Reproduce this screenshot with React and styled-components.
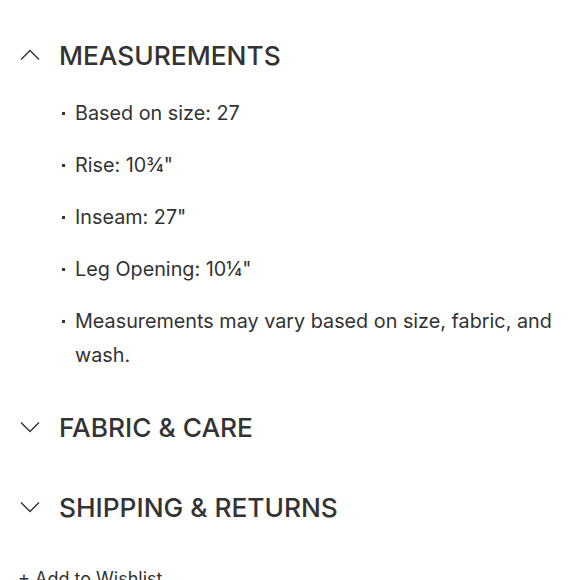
import styled, { createGlobalStyle } from "styled-components";

const GlobalStyle = createGlobalStyle`
  body {
    margin: 0;
    background: #fff;
    font-family: Inter, "Liberation Sans", sans-serif;
    color: #333;
  }
`;

const measurements = [
  "Based on size: 27",
  "Rise: 10¾\"",
  "Inseam: 27\"",
  "Leg Opening: 10¼\"",
  "Measurements may vary based on size, fabric, and wash.",
];

const sections = [
  { title: "MEASUREMENTS", open: true, items: measurements },
  { title: "FABRIC & CARE", open: false },
  { title: "SHIPPING & RETURNS", open: false },
];

function Chevron({ open }) {
  return (
    <ChevronIcon viewBox="0 0 20 12" $open={open}>
      <path d="M1 1.5 L10 10.5 L19 1.5" />
    </ChevronIcon>
  );
}

export default function App() {
  return (
    <>
      <GlobalStyle />
      <Page>
        {sections.map((s) => (
          <Section key={s.title}>
            <Header>
              <Chevron open={s.open} />
              <Title>{s.title}</Title>
            </Header>
            {s.open && (
              <List>
                {s.items.map((item) => (
                  <Item key={item}>{item}</Item>
                ))}
              </List>
            )}
          </Section>
        ))}
        <Wishlist>+ Add to Wishlist</Wishlist>
      </Page>
    </>
  );
}

const Page = styled.main`
  padding: 15px 20px 0 18px;
`;

const Section = styled.section`
  display: flex;
  flex-direction: column;
`;

const Header = styled.div`
  display: flex;
  align-items: center;
  gap: 19px;
  height: 80px;
  padding-left: 2px;
`;

const ChevronIcon = styled.svg`
  width: 20px;
  height: 12px;
  fill: none;
  stroke: #333;
  stroke-width: 1.4;
  transform: ${({ $open }) => ($open ? "rotate(180deg)" : "none")};
`;

const Title = styled.h2`
  margin: 0;
  font-size: 26.3px;
  font-weight: 500;
  letter-spacing: 0;
  color: #333;
`;

const List = styled.ul`
  list-style: none;
  margin: 1px 0 15px;
  padding: 0 0 0 45px;
  display: flex;
  flex-direction: column;
  gap: 18px;
`;

const Item = styled.li`
  position: relative;
  padding-left: 12px;
  font-size: 19.8px;
  line-height: 34px;
  color: #333;

  &::before {
    content: "";
    position: absolute;
    left: -1px;
    top: 16px;
    width: 3px;
    height: 3px;
    background: #333;
  }
`;

const Wishlist = styled.div`
  font-size: 18px;
  line-height: 24px;
  color: #333;
  padding-top: 20px;
`;
